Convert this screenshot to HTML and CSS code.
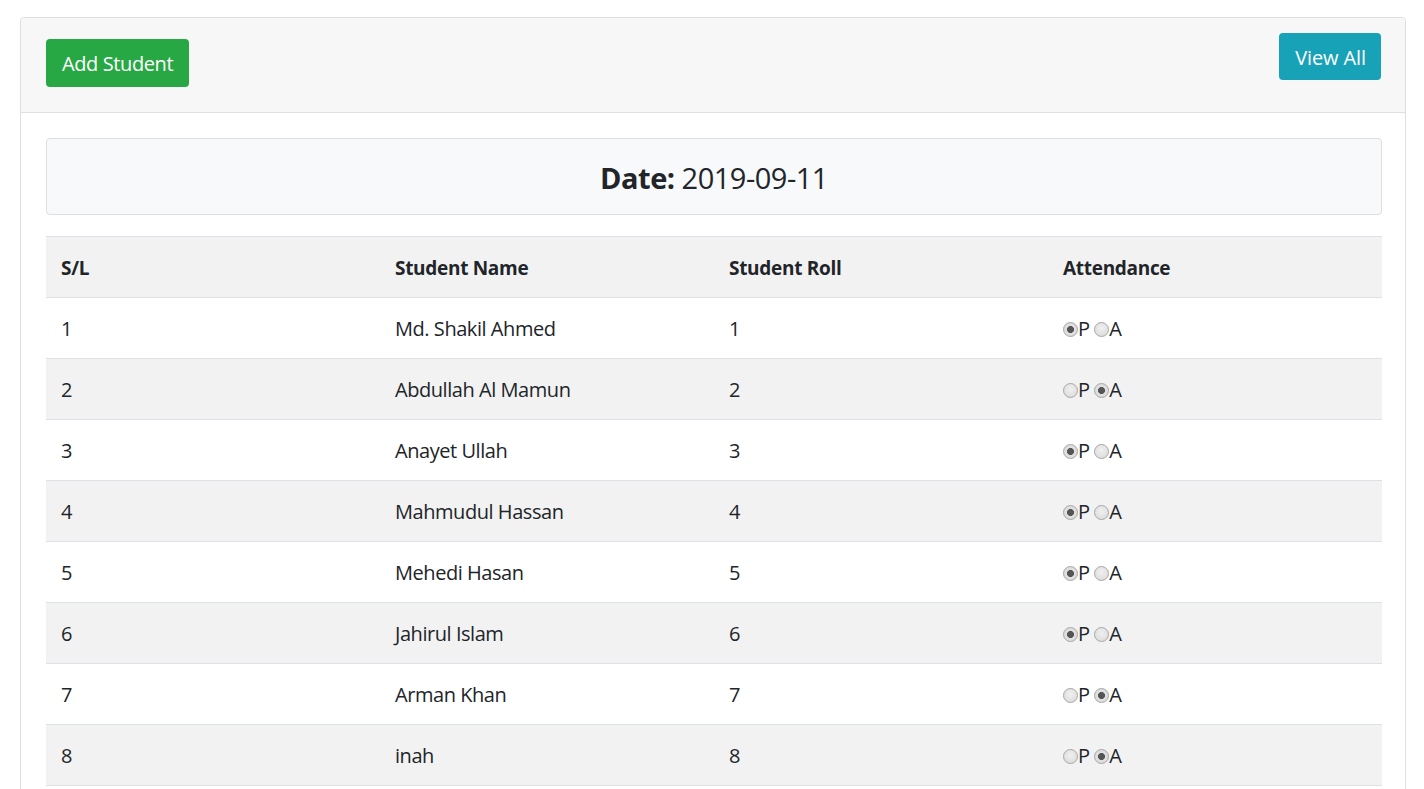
FILE: index.html
```html
<!DOCTYPE html>
<html>
<head>
<meta charset="utf-8">
<link rel="stylesheet" href="styles.css">
</head>
<body>
<div class="wrap">
  <div class="card">
    <div class="card-header">
      <a class="btn btn-success">Add Student</a>
      <a class="btn btn-info">View All</a>
    </div>
    <div class="card-body">
      <div class="date-box"><h3><strong>Date:</strong> 2019-09-11</h3></div>
      <table class="table">
        <thead>
          <tr><th>S/L</th><th>Student Name</th><th>Student Roll</th><th>Attendance</th></tr>
        </thead>
        <tbody>
          <tr><td>1</td><td>Md. Shakil Ahmed</td><td>1</td><td><input type="radio" name="a1" checked>P <input type="radio" name="a1">A</td></tr>
          <tr><td>2</td><td>Abdullah Al Mamun</td><td>2</td><td><input type="radio" name="a2">P <input type="radio" name="a2" checked>A</td></tr>
          <tr><td>3</td><td>Anayet Ullah</td><td>3</td><td><input type="radio" name="a3" checked>P <input type="radio" name="a3">A</td></tr>
          <tr><td>4</td><td>Mahmudul Hassan</td><td>4</td><td><input type="radio" name="a4" checked>P <input type="radio" name="a4">A</td></tr>
          <tr><td>5</td><td>Mehedi Hasan</td><td>5</td><td><input type="radio" name="a5" checked>P <input type="radio" name="a5">A</td></tr>
          <tr><td>6</td><td>Jahirul Islam</td><td>6</td><td><input type="radio" name="a6" checked>P <input type="radio" name="a6">A</td></tr>
          <tr><td>7</td><td>Arman Khan</td><td>7</td><td><input type="radio" name="a7">P <input type="radio" name="a7" checked>A</td></tr>
          <tr><td>8</td><td>inah</td><td>8</td><td><input type="radio" name="a8">P <input type="radio" name="a8" checked>A</td></tr>
        </tbody>
      </table>
    </div>
  </div>
</div>
</body>
</html>
```
FILE: styles.css
```css
* { box-sizing: border-box; }
html, body { margin: 0; padding: 0; background: #fff; }
body {
  font-family: "Open Sans", "Noto Sans", sans-serif;
  color: #212529;
  font-size: 16px;
}
.wrap { padding: 17px 18px 0 20px; }
.card {
  border: 1px solid #dfdfdf;
  border-radius: 4px;
  background: #fff;
}
.card-header {
  background: #f7f7f7;
  border-bottom: 1px solid #dfdfdf;
  height: 95px;
  padding: 0 24px 0 25px;
  display: flex;
  justify-content: space-between;
  align-items: flex-start;
  border-radius: 4px 4px 0 0;
}
.btn {
  display: inline-block;
  color: #fff;
  font-size: 20px;
  line-height: 30px;
  padding: 10px 16px 8px;
  border-radius: 4px;
  letter-spacing: -0.4px;
}
.btn-success { background: #28a745; margin-top: 21px; }
.btn-info { background: #17a2b8; margin-top: 15px; letter-spacing: -0.1px; padding: 10px 15px 7px 16px; }
.card-body { padding: 25px 23px 40px 25px; }
.date-box {
  background: #f8f9fa;
  border: 1px solid #dfdfdf;
  border-radius: 4px;
  height: 77px;
  display: flex;
  align-items: center;
  justify-content: center;
  padding-top: 1px;
}
.date-box h3 {
  margin: 0;
  font-size: 29px;
  font-weight: 400;
  letter-spacing: -0.5px;
}
.date-box strong { font-weight: 700; }
.table {
  width: 100%;
  margin-top: 21px;
  border-collapse: collapse;
  table-layout: fixed;
  font-size: 20px;
  letter-spacing: -0.45px;
}
.table th, .table td {
  text-align: left;
  padding: 16px 15px 14px;
  line-height: 30px;
  border-top: 1px solid #dee2e6;
  border-bottom: 1px solid #dee2e6;
}
.table th { font-weight: 700; background: #f2f2f2; font-size: 19px; letter-spacing: -0.3px; }
.table tbody tr:nth-child(even) td { background: #f2f2f2; }
input[type="radio"] {
  appearance: none;
  -webkit-appearance: none;
  width: 15px;
  height: 15px;
  margin: 0;
  border: 1px solid #a8a8a8;
  border-radius: 50%;
  background: radial-gradient(circle at 50% 40%, #f0f0f0 0%, #d8d8d8 100%);
  vertical-align: -1px;
}
input[type="radio"]:checked {
  background: radial-gradient(circle, #555 0 3.2px, #e2e2e2 3.8px, #d4d4d4 100%);
}
```
